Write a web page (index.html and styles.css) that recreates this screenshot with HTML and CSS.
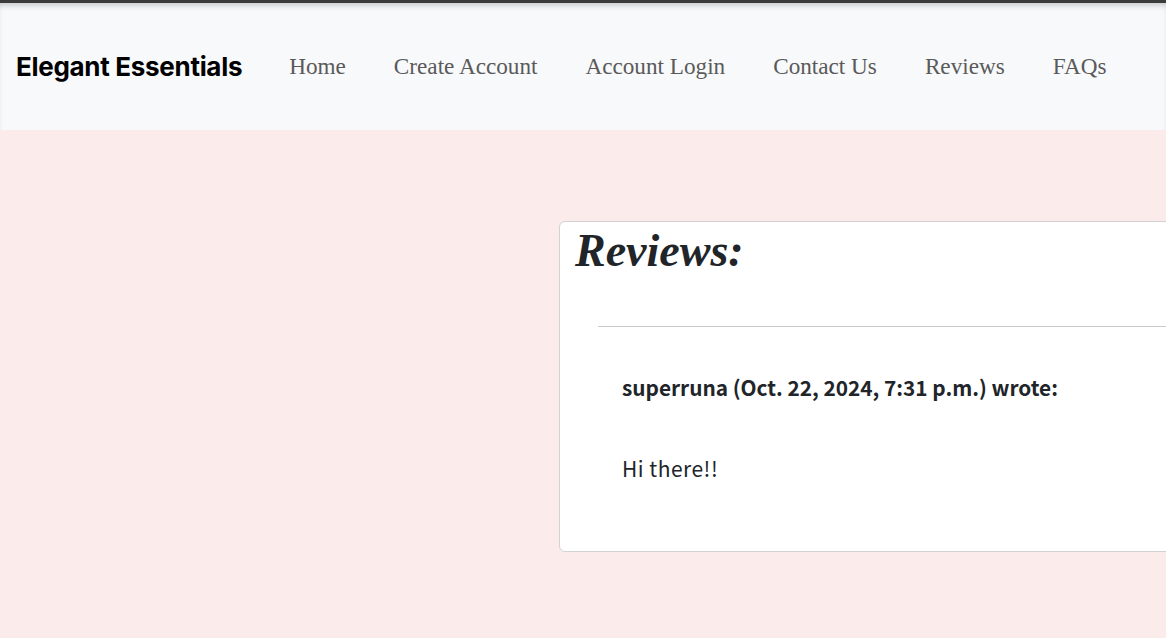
FILE: index.html
```html
<!DOCTYPE html>
<html lang="en">
<head>
<meta charset="utf-8">
<title>Reviews - Elegant Essentials</title>
<link rel="stylesheet" href="styles.css">
</head>
<body>
<div class="topbar"></div>
<nav class="navbar">
  <a class="brand" href="#">Elegant Essentials</a>
  <ul class="nav-links">
    <li><a href="#">Home</a></li>
    <li><a href="#">Create Account</a></li>
    <li><a href="#">Account Login</a></li>
    <li><a href="#">Contact Us</a></li>
    <li><a href="#">Reviews</a></li>
    <li><a href="#">FAQs</a></li>
  </ul>
</nav>
<main class="page">
  <div class="spacer"></div>
  <section class="card">
    <h2 class="card-title">Reviews:</h2>
    <div class="review-list">
      <hr class="divider">
      <div class="review">
        <p class="review-author">superruna (Oct. 22, 2024, 7:31 p.m.) wrote:</p>
        <p class="review-body">Hi there!!</p>
      </div>
    </div>
  </section>
</main>
</body>
</html>
```

FILE: styles.css
```css
html, body {
  margin: 0;
  padding: 0;
}
body {
  background: #fcebeb;
  overflow-x: hidden;
  font-family: "Noto Sans CJK KR", "Noto Sans", sans-serif;
  color: #212529;
}
.topbar {
  height: 3px;
  background: #3b3b3b;
}
.navbar {
  height: 127px;
  background: #f8f9fa;
  box-shadow: inset 0 5px 6px -3px rgba(0, 0, 0, 0.22);
  display: flex;
  align-items: center;
  padding-left: 16px;
  box-sizing: border-box;
}
.brand {
  font-family: Inter, "Liberation Sans", sans-serif;
  font-weight: 700;
  font-size: 26px;
  color: #000;
  text-decoration: none;
  letter-spacing: -0.3px;
  margin-right: 47px;
}
.nav-links {
  display: flex;
  list-style: none;
  margin: 0;
  padding: 0;
  gap: 48px;
}
.nav-links a {
  font-family: "Liberation Serif", serif;
  font-size: 23.2px;
  color: #5a5a5a;
  text-decoration: none;
}
.page {
  display: flex;
  padding-top: 91px;
  padding-bottom: 87px;
}
.spacer {
  flex: 0 0 559px;
}
.card {
  flex: 0 0 680px;
  height: 331px;
  box-sizing: border-box;
  background: #fff;
  border: 1px solid #d2d2d2;
  border-radius: 6px;
  padding: 0 0 0 15px;
}
.card-title {
  font-family: "Liberation Serif", serif;
  font-style: italic;
  font-weight: 700;
  font-size: 46px;
  line-height: 50px;
  margin: 4px 0 0 0;
  color: #212529;
}
.review-list {
  padding-left: 23px;
}
.divider {
  border: 0;
  border-top: 1px solid #c8c8c8;
  margin: 50px 0 0 0;
}
.review {
  padding-left: 24px;
}
.review-author {
  font-weight: 700;
  font-size: 20.8px;
  line-height: 28px;
  margin: 46px 0 0 0;
}
.review-body {
  font-size: 21px;
  letter-spacing: 0.5px;
  line-height: 28px;
  margin: 53px 0 0 0;
}
```
